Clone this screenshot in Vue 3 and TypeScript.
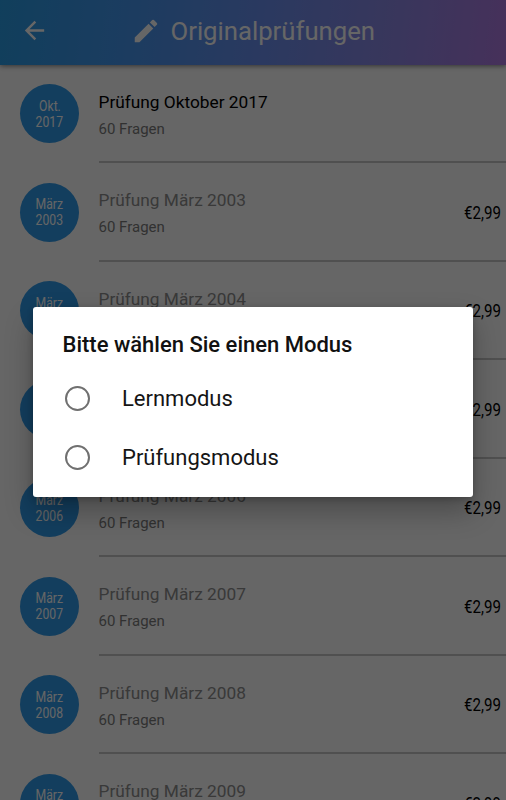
<script setup lang="ts">
interface Exam {
  month: string
  year: number
  title: string
  price?: string
}

const years: number[] = [2003, 2004, 2005, 2006, 2007, 2008, 2009]

const exams: Exam[] = [
  { month: 'Okt.', year: 2017, title: 'Prüfung Oktober 2017' },
  ...years.map((year) => ({
    month: 'März',
    year,
    title: `Prüfung März ${year}`,
    price: '€2,99',
  })),
]

const modes: string[] = ['Lernmodus', 'Prüfungsmodus']
</script>

<template>
  <div class="screen">
    <header class="bar">
      <svg class="back" viewBox="0 0 24 24"><path d="M20 11H7.83l5.59-5.59L12 4l-8 8 8 8 1.41-1.41L7.83 13H20v-2z" /></svg>
      <h1 class="heading">
        <svg class="pencil" viewBox="0 0 24 24"><path d="M3 17.25V21h3.75L17.81 9.94l-3.75-3.75L3 17.25zM20.71 7.04a.996.996 0 0 0 0-1.41l-2.34-2.34a.996.996 0 0 0-1.41 0l-1.83 1.83 3.75 3.75 1.83-1.83z" /></svg>
        <span>Originalprüfungen</span>
      </h1>
    </header>
    <ul class="list">
      <li v-for="exam in exams" :key="exam.title" class="row">
        <div class="badge">
          <span class="condensed">{{ exam.month }}</span>
          <span class="condensed">{{ exam.year }}</span>
        </div>
        <div class="body" :class="{ locked: exam.price }">
          <div class="texts">
            <div class="title">{{ exam.title }}</div>
            <div class="count">60 Fragen</div>
          </div>
          <span v-if="exam.price" class="price">{{ exam.price }}</span>
        </div>
      </li>
    </ul>
    <div class="scrim">
      <div class="dialog" role="dialog">
        <h2 class="question">Bitte wählen Sie einen Modus</h2>
        <label v-for="mode in modes" :key="mode" class="option">
          <span class="radio"></span>
          <span>{{ mode }}</span>
        </label>
      </div>
    </div>
  </div>
</template>

<style>
body {
  margin: 0;
  overflow: hidden;
}
</style>

<style scoped>
.screen {
  position: relative;
  width: 506px;
  height: 800px;
  overflow: hidden;
  background: #fff;
  font-family: Roboto, 'Liberation Sans', sans-serif;
}

.bar {
  position: relative;
  display: flex;
  align-items: center;
  box-sizing: border-box;
  height: 65px;
  padding: 0 0 4px 20px;
  background: linear-gradient(97deg, #2a9de6 0%, #4597f0 25%, #6890f0 50%, #8f88e6 78%, #b07ae2 100%);
  box-shadow: 0 1px 5px rgba(0, 0, 0, 0.5);
  color: #fff;
}

.back {
  width: 29px;
  height: 29px;
  fill: #fff;
}

.heading {
  display: flex;
  align-items: center;
  margin: 0 0 0 82px;
  font-size: 25.7px;
  font-weight: 400;
  line-height: 32px;
}

.heading span {
  padding-top: 1px;
}

.pencil {
  width: 30px;
  height: 30px;
  margin-right: 9.5px;
  fill: #fff;
}

.list {
  margin: 0;
  padding: 0;
  list-style: none;
}

.row {
  display: flex;
  align-items: flex-start;
  height: 98.5px;
}

.badge {
  display: flex;
  flex: none;
  flex-direction: column;
  align-items: center;
  justify-content: center;
  box-sizing: border-box;
  width: 59px;
  height: 59px;
  margin: 19px 19.5px 0 20px;
  padding-top: 2px;
  border-radius: 50%;
  background: #309bea;
  color: #fff;
  font-size: 14.5px;
  line-height: 16px;
}

.condensed {
  transform: scaleX(0.84);
}

.body {
  display: flex;
  flex: 1;
  justify-content: space-between;
  box-sizing: border-box;
  height: 98px;
  border-bottom: 2px solid #c8c8c8;
}

.texts {
  padding-top: 25.8px;
}

.title {
  color: #000;
  font-size: 17.3px;
  line-height: 22px;
}

.locked .title {
  color: #8e8e8e;
}

.count {
  margin-top: 7.2px;
  color: #7c7c7c;
  font-size: 15px;
  line-height: 18px;
}

.price {
  margin: 38.4px 5px 0 0;
  font-size: 18.4px;
  line-height: 22px;
  transform: scaleX(0.82);
  transform-origin: right;
}

.scrim {
  position: absolute;
  inset: 0;
  padding: 307px 33px 0;
  background: rgba(0, 0, 0, 0.6);
}

.dialog {
  box-sizing: border-box;
  height: 189.5px;
  padding: 23px 29.5px 0;
  border-radius: 3px;
  background: #fff;
  box-shadow: 0 14px 28px rgba(0, 0, 0, 0.28), 0 2px 6px rgba(0, 0, 0, 0.2);
}

.question {
  margin: 0 0 8.5px;
  color: #111;
  font-size: 22px;
  font-weight: 500;
  line-height: 30px;
}

.option {
  display: flex;
  align-items: center;
  height: 59px;
  color: #151515;
  font-size: 22px;
}

.radio {
  box-sizing: border-box;
  width: 25px;
  height: 25px;
  margin: 0 32.5px 0 2px;
  border: 2.5px solid #707070;
  border-radius: 50%;
}
</style>
